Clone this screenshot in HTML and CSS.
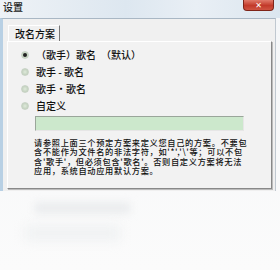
FILE: index.html
```html
<!DOCTYPE html>
<html>
<head>
    <meta charset="utf-8">
    <title>设置</title>
    <link rel="stylesheet" href="styles.css">
</head>
<body>
    <div class="win">
        <div class="titlebar">
            <span class="title">设置</span>
            <span class="close">&#x2715;</span>
        </div>
        <div class="dlg">
            <div class="tabs"><span class="tab">改名方案</span></div>
            <div class="panel">
                <label class="opt"><span class="radio on"></span>（歌手）歌名　（默认）</label>
                <label class="opt"><span class="radio"></span>歌手 - 歌名</label>
                <label class="opt"><span class="radio"></span>歌手・歌名</label>
                <label class="opt"><span class="radio"></span>自定义</label>
                <div class="field"></div>
                <p class="note">请参照上面三个预定方案来定义您自己的方案。不要包<br>含不能作为文件名的非法字符，如'*','\'等；可以不包<br>含'歌手'，但必须包含'歌名'。否则自定义方案将无法<br>应用，系统自动应用默认方案。</p>
            </div>
        </div>
        <div class="under">
            <div class="blur1"></div>
            <div class="blur2"></div>
        </div>
    </div>
</body>
</html>
```

FILE: styles.css
```css
* {box-sizing: border-box;}
body {margin: 0; background: #f6f8f9; font-family: "Noto Sans CJK SC", "DejaVu Sans", sans-serif; color: #111;}

.win {width: 280px; height: 270px; overflow: hidden;
    background: linear-gradient(#f4f6f8, #fbfbfb);}

.titlebar {
    height: 18px;
    display: flex;
    align-items: flex-start;
    justify-content: space-between;
    background: linear-gradient(90deg, #eef2f6, #dde7f0 45%, #e9eff5 70%, #dbe6ef);}
.title {font-size: 10px; line-height: 13px; padding-left: 3px; color: #222; font-weight: 500;}
.close {
    width: 31px;
    height: 11px;
    margin-right: 6px;
    border-radius: 0 0 4px 4px;
    background: linear-gradient(#e07a6a, #c23a2a 55%, #cf5442);
    border: 1px solid #7e2418;
    border-top: none;
    color: #fff;
    font-size: 8px;
    line-height: 10px;
    text-align: center;
    font-weight: bold;}

.dlg {
    height: 173px;
    margin: 0 4px 0 0;
    border-left: 3px solid #b8d0e4;
    border-top: 1px solid #a9b7c4;
    border-right: 1px solid #c0c8d0;
    background: #f0f0f0;
    padding: 3px 3px 0 4px;}

.tabs {height: 19px; display: flex; align-items: flex-end;}
.tab {
    font-size: 10px;
    line-height: 15px;
    padding: 0 4px 0 6px;
    margin-left: 1px;
    border-left: 1px solid #fff;
    border-top: 1px solid #fff;
    border-right: 1px solid #777;
    font-weight: 500;}

.panel {
    height: 148px;
    border: 1px solid #fff;
    border-right-color: #888;
    border-bottom-color: #888;
    box-shadow: 1px 1px 0 #bbb;
    background: #f2f2f2;
    padding: 4px 0 0 13px;}

.opt {display: flex; align-items: center; height: 17px; font-size: 10px; font-weight: 500;}
.radio {
    width: 8px;
    height: 8px;
    border-radius: 50%;
    margin-right: 7px;
    background: radial-gradient(#dfeadb, #b8c8b4);
    border: 1px solid #c9d3c6;
    display: flex;
    align-items: center;
    justify-content: center;}
.radio.on::after {content: ""; width: 4px; height: 4px; border-radius: 50%; background: #222;}

.field {
    width: 209px;
    height: 15px;
    margin: 2px 0 0 14px;
    background: #cce8cc;
    border: 1px solid #9aa69a;
    border-right-color: #e6e6e6;
    border-bottom-color: #e6e6e6;}

.note {
    margin: 7px 0 0 13px;
    font-size: 8.2px;
    line-height: 9.4px;
    letter-spacing: 0.7px;
    white-space: nowrap;
    font-weight: 500;
    color: #111;}

.under {position: relative; height: 80px;}
.blur1 {
    position: absolute; left: 35px; top: 12px; width: 95px; height: 10px;
    background: #e8eaec; filter: blur(4px);}
.blur2 {
    position: absolute; left: 25px; top: 35px; width: 95px; height: 14px;
    background: #eff1f2; filter: blur(6px);}
```
